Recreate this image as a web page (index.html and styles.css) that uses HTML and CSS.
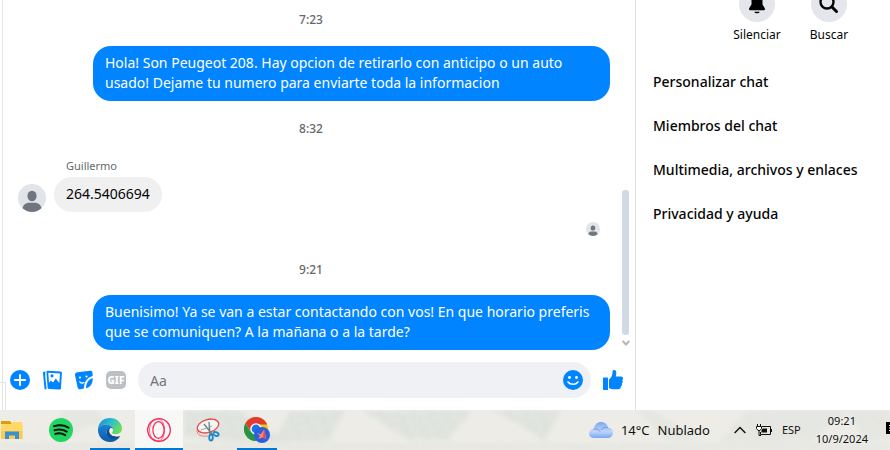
FILE: index.html
```html
<!DOCTYPE html>
<html lang="es">
<head>
    <meta charset="UTF-8">
    <meta name="viewport" content="width=device-width, initial-scale=1.0">
    <title>Chat</title>
    <link rel="stylesheet" href="styles.css">
</head>
<body>
    <svg class="defs" width="0" height="0" aria-hidden="true">
        <symbol id="person" viewBox="0 0 28 28">
            <circle cx="14" cy="14" r="14" fill="#e1e5ea"/>
            <ellipse cx="14" cy="12" rx="4.6" ry="5.2" fill="#6f767d"/>
            <path d="M4.6 24.3C5 21 8 18.8 11 18.8h6c3 0 6 2.200 6.400 5.500A14 14 0 0 1 4.600 24.300z" fill="#6f767d"/>
        </symbol>
    </svg>

    <div class="app">
        <div class="gutter"><div class="gutter-box"></div></div>

        <main class="chat">
            <div class="thread">
                <div class="messages">
                    <time class="stamp">7:23</time>
                    <p class="bubble mine">Hola! Son Peugeot 208. Hay opcion de retirarlo con anticipo o un auto usado! Dejame tu numero para enviarte toda la informacion</p>
                    <time class="stamp">8:32</time>
                    <div class="received">
                        <svg class="avatar" width="28" height="28"><use href="#person"/></svg>
                        <div>
                            <span class="sender">Guillermo</span>
                            <p class="bubble theirs">264.5406694</p>
                        </div>
                    </div>
                    <svg class="seen" width="14" height="14"><use href="#person"/></svg>
                    <time class="stamp late">9:21</time>
                    <p class="bubble mine">Buenisimo! Ya se van a estar contactando con vos! En que horario preferis que se comuniquen? A la mañana o a la tarde?</p>
                </div>
                <div class="scrollbar">
                    <div class="thumb"></div>
                    <svg width="8" height="6" viewBox="0 0 8 6"><path d="M.7 1 4 4.500 7.300 1" fill="none" stroke="#b5b5b5" stroke-width="2"/></svg>
                </div>
            </div>

            <form class="composer">
                <button type="button" aria-label="Más">
                    <svg width="20" height="20" viewBox="0 0 20 20"><circle cx="10" cy="10" r="10" fill="#0084ff"/><path d="M10 4.800v10.400M4.800 10h10.400" stroke="#fff" stroke-width="1.800" stroke-linecap="round"/></svg>
                </button>
                <button type="button" aria-label="Foto">
                    <svg width="20" height="20" viewBox="0 0 20 20">
                        <path d="M.9 2.200 3.400 1.300 3.200 6l1.400 13.300-2-.1z" fill="#0084ff"/>
                        <path d="M6 .8 18.500 1.600c1 .1 1.500.7 1.400 1.600L19 18c-.1 1-.7 1.500-1.600 1.500L7 19c-.8 0-1.400-.6-1.400-1.400L4.500 2.200C4.500 1.300 5 .8 6 .8z" fill="#0084ff"/>
                        <path d="m6.300 2.700 11.700.7-.7 9.500-3.600-4.400-2.700 4-2.200-2-1.800 2.300z" fill="#fff"/>
                        <circle cx="10" cy="5.800" r="1.600" fill="#0084ff"/>
                    </svg>
                </button>
                <button type="button" aria-label="Sticker">
                    <svg width="20" height="20" viewBox="0 0 20 20">
                        <path d="M3.500 2.300 16 .8c1.500-.2 2.500.5 2.500 2l.2 3.200c-5.500 1.500-8.500 5.500-8.700 12.500l-3.500.7c-1.500.2-2.600-.5-2.900-2L1 5.200c-.2-1.600.8-2.700 2.500-2.900z" fill="#0084ff"/>
                        <path d="M18.700 8c.2 5.500-2 9-6.700 10.300.2-5 2.200-8.800 6.700-10.300z" fill="#0084ff"/>
                        <circle cx="6" cy="7.500" r="1.100" fill="#fff"/><circle cx="12.500" cy="6.500" r="1.100" fill="#fff"/>
                        <path d="M5.800 11.800c1.200 1.500 2.800 1.700 4.200.8" fill="none" stroke="#fff" stroke-width="1.200" stroke-linecap="round"/>
                    </svg>
                </button>
                <button type="button" class="gif">GIF</button>
                <div class="field">
                    <input type="text" placeholder="Aa" aria-label="Mensaje">
                    <button type="button" aria-label="Emoji">
                        <svg width="20" height="20" viewBox="0 0 20 20"><circle cx="10" cy="10" r="10" fill="#0084ff"/><circle cx="6.500" cy="7.500" r="1.400" fill="#fff"/><circle cx="13.500" cy="7.500" r="1.400" fill="#fff"/><path d="M5 12c2.300 3 7.700 3 10 0" fill="none" stroke="#fff" stroke-width="1.600" stroke-linecap="round"/></svg>
                    </button>
                </div>
                <button type="button" aria-label="Me gusta">
                    <svg width="20" height="20" viewBox="0 0 20 20"><path d="M1 7.500h3.200c.5 0 .8.300.8.800V20H1c-.6 0-1-.4-1-1V8.500c0-.6.400-1 1-1z" fill="#0084ff"/><path d="M6 9.500c2.200-1.500 3.500-4 3.500-7.500C9.500.6 10.300 0 11.300 0c1.600 0 2.300 1.800 2 4l-.5 2.500H18c1.300 0 2 .8 2 1.900s-.6 1.500-.8 1.900c.4.500.7 1 .5 1.800-.1.700-.5 1.200-.9 1.500.3.600.3 1.200 0 1.800-.2.500-.6.800-1 1 .1 1.800-.8 2.800-2.800 2.800h-4c-1.800 0-3.500-.3-5-1.200z" fill="#0084ff"/></svg>
                </button>
            </form>
        </main>

        <aside class="details">
            <div class="actions">
                <button type="button">
                    <span class="round"><svg width="20" height="22" viewBox="0 0 20 22"><path d="M10 1c-4 0-5.500 3-5.500 6v4.500L2.300 15c-.7 1.200 0 2.300 1.200 2.300h13c1.200 0 1.900-1.100 1.200-2.300l-2.200-3.500V7c0-3-1.500-6-5.500-6zM7.300 18.700h5.400c-.5 2-4.900 2-5.400 0z"/></svg></span>
                    Silenciar
                </button>
                <button type="button">
                    <span class="round"><svg width="20" height="20" viewBox="0 0 20 20" fill="none" stroke="#050505" stroke-linecap="round"><circle cx="8" cy="8" r="6.500" stroke-width="2.400"/><path d="m13 13 4.500 4.500" stroke-width="3"/></svg></span>
                    Buscar
                </button>
            </div>
            <button type="button" class="option">Personalizar chat</button>
            <button type="button" class="option">Miembros del chat</button>
            <button type="button" class="option">Multimedia, archivos y enlaces</button>
            <button type="button" class="option">Privacidad y ayuda</button>
        </aside>
    </div>

    <footer class="taskbar">
        <!-- blurred wallpaper seen through the bar -->
        <svg class="wallpaper" viewBox="0 0 890 40" preserveAspectRatio="none" aria-hidden="true">
            <defs>
                <filter id="soft"><feGaussianBlur stdDeviation="2"/></filter>
                <pattern id="grain" width="14" height="9" patternUnits="userSpaceOnUse" patternTransform="rotate(-28)">
                    <rect width="14" height="9" fill="#dde1db"/><path d="M0 3h9M5 7h9" stroke="#e8eae5" stroke-width="2"/>
                </pattern>
            </defs>
            <g fill="url(#grain)" filter="url(#soft)">
                <path d="M64 0h30l24 22-30-8-24 18-14-8z" opacity=".6"/>
                <path d="M184 0h54l50 32h-44l-60-6zM290 0h55l-16 31h-55zM362 0h110l-24 30h-40zM492 0h69l-16 31-18-12z"/>
                <path d="M636 0h16l46 30h-30zM748 0h100l-38 31h-90zM846 0h44v30h-24z" opacity=".6"/>
                <path d="M0 33h890v7H0z" opacity=".45"/>
            </g>
        </svg>

        <nav class="apps">
            <button type="button" aria-label="Explorador de archivos">
                <svg width="24" height="24" viewBox="0 0 24 24"><path d="M1 3h9l2 3H1z" fill="#d99f08"/><path d="M1 6h10l2-2h9.500v17H1z" fill="#ffd865"/><path d="M1 13h21.500v8H1z" fill="#fccb4c"/><path d="M5 21v-7.500h14V21h-4v-3.500H9V21z" fill="#3b8fd3"/></svg>
            </button>
            <button type="button" aria-label="Spotify">
                <svg width="24" height="24" viewBox="0 0 24 24"><circle cx="12" cy="12" r="12" fill="#1fd760"/><path d="M5 8.300c5-1.500 10.500-1 14.500 1.400M5.500 12.300c4.500-1.300 8.800-.7 12.300 1.300M6.300 15.900c3.500-1 7-.5 10 1.200" fill="none" stroke="#06130a" stroke-width="2" stroke-linecap="round"/></svg>
            </button>
            <button type="button" class="open" aria-label="Edge">
                <svg width="24" height="24" viewBox="0 0 24 24">
                    <defs>
                        <linearGradient id="edgeTop" x2="1" y2=".5"><stop stop-color="#1583c9"/><stop offset=".5" stop-color="#2bbbd5"/><stop offset="1" stop-color="#6ade5c"/></linearGradient>
                        <linearGradient id="edgeLow" x2="0" y2="1"><stop stop-color="#1e82d2"/><stop offset="1" stop-color="#0b5cab"/></linearGradient>
                    </defs>
                    <path d="M0 11C.5 4.500 5.500 0 12 0c7 0 12 5 12 10.500 0 3.600-2.800 6-6 6-2.600 0-4.200-1-4-2 .1-.6 1-1.200 1-3C15 9 12 6.500 8 6.500 4 6.500 1 8.500 0 11z" fill="url(#edgeTop)"/>
                    <path d="M0 11c1.500-3.500 5-4.500 8-4.500 4 0 7 2.500 7 5-1-1.300-6-2-6.500 2.500-.4 4.500 5 7.500 10 6.200L22 18.500C20 22 16.500 24 12 24 5 24 0 18.500 0 12z" fill="url(#edgeLow)"/>
                    <path d="M8.500 14c.2-2.600 2-4 4-4-1 1.200-1.300 2.500-1 4 .5 3 5 5.500 10.800 4L20 20.300c-4.500 2.700-12 .2-11.500-6.300z" fill="#124c91"/>
                    <path d="M15 11.500c0 1.800-.9 2.400-1 3-.2 1 1.400 2 4 2 1.500 0 3-.5 4-1.400l.7 2.300c-5 2.200-10.200.4-11.200-3.400-.3-1.500 0-2.800 1-4 1.200 0 2.100.5 2.500 1.500z" fill="#f1f2ee"/>
                </svg>
            </button>
            <button type="button" class="open active" aria-label="Opera">
                <svg width="24" height="24" viewBox="0 0 24 24" fill="none" stroke="#fa2353"><circle cx="12" cy="12" r="11.300" stroke-width="1.300"/><path d="M12 1C5 1.500 2.500 6.500 2.500 12S5 22.500 12 23M12 1c3 .7 5.500 5 5.500 11S15 22.300 12 23" stroke-width=".7"/><ellipse cx="11.500" cy="12" rx="5.600" ry="8.400" stroke-width="1.200"/></svg>
            </button>
            <button type="button" aria-label="Recortes">
                <svg width="24" height="24" viewBox="0 0 24 24" fill="none"><ellipse cx="12" cy="8" rx="11" ry="6.500" transform="rotate(-17 12 8)" fill="#f7f6f4" stroke="#e84b48" stroke-width="1.300"/><path d="M1 12c0 5 4 7 11 6" stroke="#ec817c" stroke-width="1"/><path d="m8 6 8 10M13 4l1 12" stroke="#687b83" stroke-width="1.300"/><path d="m5 12 11-4" stroke="#9ca8ac"/><ellipse cx="15" cy="19.500" rx="1.800" ry="3" stroke="#1d87c7" stroke-width="1.800"/><ellipse cx="20" cy="16" rx="2.800" ry="1.800" stroke="#1d87c7" stroke-width="1.800" transform="rotate(25 20 16)"/></svg>
            </button>
            <button type="button" class="open" aria-label="Chrome">
                <svg width="26" height="26" viewBox="0 0 26 26">
                    <circle cx="12" cy="12" r="12" fill="#fbc116"/>
                    <path d="M1.600 6A12 12 0 0 0 12 24l5-9-11-1z" fill="#249447"/>
                    <path d="M1.600 6A12 12 0 0 1 22.400 6L23 7.500H12L6.500 14z" fill="#e33b2e"/>
                    <circle cx="12" cy="12" r="5.800" fill="#fff"/><circle cx="12" cy="12" r="4.400" fill="#1a73e8"/>
                    <circle cx="18" cy="18" r="8" fill="#2b60dc"/>
                    <path d="m13 16 3.800 1.200L20 12.500l1.300 5 1 4.500-3.500-1.500-4.500 1.500 1.700-3z" fill="#ff8173"/><path d="m20 12.500-1.200 8 3.500 1.500-1-4.500z" fill="#e64e58"/>
                </svg>
            </button>
        </nav>

        <div class="tray">
            <button type="button" class="weather">
                <svg width="24" height="17" viewBox="0 0 24 17">
                    <defs><linearGradient id="cloud" x2="0" y2="1"><stop stop-color="#7ba8f0"/><stop offset=".6" stop-color="#bfd5fb"/><stop offset="1" stop-color="#79a5ee"/></linearGradient></defs>
                    <path d="M5 16C2 16 0 14 0 11.500S2 7 4.700 6.800C5.500 2.500 8.500 0 12 0c3.700 0 6.300 2.300 7 5.500 3 .2 5 2.500 5 5.200C24 13.800 21.800 16 18.500 16z" fill="url(#cloud)"/><path d="M4.700 7c3-.5 5 .5 6.500 2.700M12 8c1.500-2 4-3 7-2.500" fill="none" stroke="#7099e1"/>
                </svg>
                <span>14°C</span><span>Nublado</span>
            </button>
            <button type="button" aria-label="Iconos ocultos"><svg width="12" height="8" viewBox="0 0 12 8"><path d="m.6 7 5.400-5.500L11.400 7" fill="none" stroke="#111" stroke-width="1.400"/></svg></button>
            <button type="button" aria-label="Batería"><svg width="16" height="12" viewBox="0 0 16 12"><path d="M6 2.500h8.500v8H4.500V8M15.500 5v3M1.500 0v2.500M4.500 0v2.500M3 6v5.500h2" fill="none" stroke="#111"/><path d="M.5 2.500h5v2L4 6.500H2L.5 4.500z" fill="#fff" stroke="#111"/><path d="M6.500 4.500H11v4H5.500v-2z" fill="#111"/></svg></button>
            <button type="button" class="lang">ESP</button>
            <button type="button" class="clock"><time>09:21</time><time>10/9/2024</time></button>
            <button type="button" class="notices" aria-label="Notificaciones"><svg width="16" height="16" viewBox="0 0 16 16"><path d="M0 0h16v12H9l-4 4v-4H0z" fill="#000"/><path d="M3 3.500h10M3 6h10M3 8.500h10" stroke="#fff"/></svg></button>
        </div>
    </footer>
</body>
</html>
```

FILE: styles.css
```css
* {
    box-sizing: border-box;
}

body {
    margin: 0;
    height: 100vh;
    display: flex;
    flex-direction: column;
    overflow: hidden;
    background: #fff;
    color: #050505;
    font-family: "Noto Sans", "Open Sans", sans-serif;
    font-size: 14px;
}

button {
    padding: 0;
    border: 0;
    background: none;
    color: inherit;
    font: inherit;
    cursor: pointer;
}

svg {
    display: block;
    flex: none;
}

p {
    margin: 0;
}

.defs {
    position: absolute;
}

.app {
    flex: 1;
    min-height: 0;
    display: flex;
}

.gutter {
    width: 6px;
    margin-right: -3px;
    display: flex;
    align-items: flex-end;
    background: linear-gradient(to right, transparent 2px, #e4e4e4 2px, #e4e4e4 3px, transparent 3px);
}

.gutter-box {
    width: 6px;
    height: 28px;
    border: solid #e4e4e4;
    border-width: 1px 1px 0 0;
}

/* chat */
.chat {
    flex: 1;
    min-width: 0;
    display: flex;
    flex-direction: column;
    border-right: 1px solid #dedfe1;
}

.thread {
    flex: 1;
    min-height: 0;
    display: flex;
}

.messages {
    flex: 1;
    display: flex;
    flex-direction: column;
    justify-content: flex-end;
    padding: 0 9px 0 15px;
}

.stamp {
    align-self: center;
    margin-right: 6px;
    padding: 20px 0 18px;
    color: #65676b;
    font-size: 12px;
    font-weight: 500;
    line-height: 16px;
}

.stamp.late {
    padding: 26px 0 17px;
}

.bubble {
    border-radius: 18px;
    padding: 7px 12px 8px;
    font-size: 14px;
    line-height: 20px;
}

.mine {
    margin-left: 75px;
    background: #0084ff;
    color: #fff;
}

.theirs {
    background: #f0f0f0;
}

.received {
    display: flex;
    align-items: flex-end;
    gap: 8px;
    padding-top: 3px;
}

.sender {
    display: block;
    padding: 0 12px 3px;
    color: #65676b;
    font-size: 11px;
    line-height: 16px;
}

.seen {
    align-self: flex-end;
    margin: 10px 10px 0 0;
}

.scrollbar {
    width: 16px;
    display: flex;
    flex-direction: column;
    justify-content: flex-end;
    padding: 0 6px 4px 3px;
    gap: 5px;
}

.thumb {
    height: 42%;
    border-radius: 3px;
    background: #d0dae3;
}

.composer {
    display: flex;
    align-items: center;
    gap: 12px;
    padding: 12px 12px 12px 7px;
}

.gif {
    width: 20px;
    height: 18px;
    border-radius: 5px;
    background: #bcc0c4;
    color: #fff;
    font-size: 10px;
    font-weight: 800;
    line-height: 18px;
}

.field {
    flex: 1;
    display: flex;
    align-items: center;
    height: 36px;
    padding: 0 8px 0 12px;
    border-radius: 18px;
    background: #f0f1f5;
}

.field input {
    flex: 1;
    min-width: 0;
    padding: 0;
    border: 0;
    outline: 0;
    background: none;
    font: inherit;
}

.field input::placeholder {
    color: #737679;
}

/* side panel */
.details {
    width: 254px;
    display: flex;
    flex-direction: column;
    align-items: stretch;
    overflow: hidden;
}

.actions {
    display: flex;
    justify-content: flex-end;
    margin-top: -14px;
    padding: 0 25px 17px 0;
}

.actions button {
    width: 72px;
    font-size: 12px;
    line-height: 16px;
}

.round {
    width: 36px;
    height: 36px;
    display: grid;
    place-items: center;
    margin: 0 auto 5px;
    border-radius: 50%;
    background: #e4e6eb;
}

.option {
    padding: 12px 17px;
    font-size: 14px;
    font-weight: 500;
    line-height: 20px;
    text-align: left;
}

/* taskbar */
.taskbar {
    position: relative;
    height: 40px;
    display: flex;
    justify-content: space-between;
    background: #edece7;
    color: #111;
    overflow: hidden;
}

.wallpaper {
    position: absolute;
    width: 100%;
    height: 100%;
}

.apps,
.tray {
    position: relative;
    display: flex;
}

.apps {
    gap: 1px;
    margin-left: -12px;
}

.apps button {
    width: 48px;
    display: grid;
    place-items: center;
}

.apps .open {
    background: linear-gradient(#0078d4, #0078d4) bottom / 40px 2px no-repeat;
}

.apps .active {
    background: linear-gradient(#0078d4, #0078d4) bottom / 100% 2px no-repeat, #f8f8f6;
}

.tray {
    align-items: center;
    gap: 10px;
    margin-right: -12px;
}

.weather {
    display: flex;
    align-items: center;
    gap: 8px;
    margin-right: 14px;
    font-size: 13px;
}

.lang,
.clock {
    font-size: 11px;
    line-height: 18px;
}

.clock {
    display: grid;
    margin: 0 8px 0 5px;
    text-align: center;
}
```
